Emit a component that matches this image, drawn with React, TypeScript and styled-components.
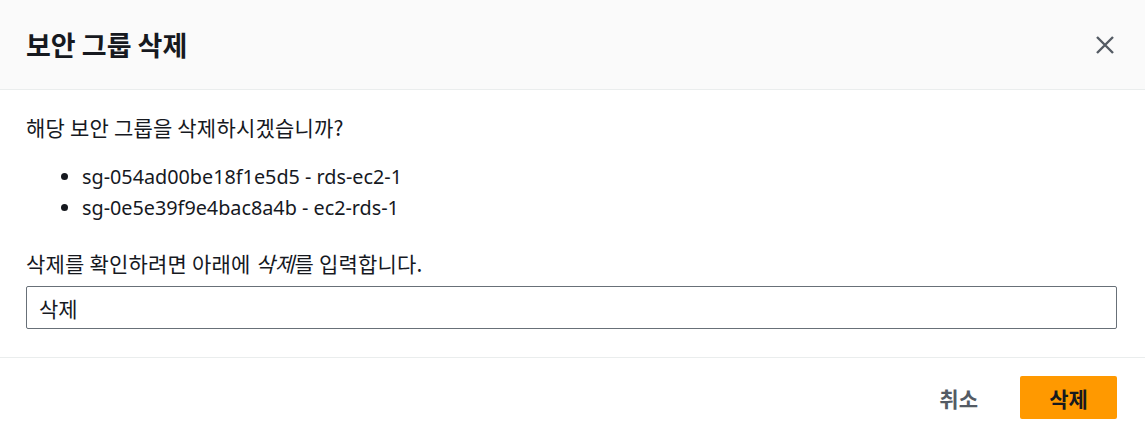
import React, { useState } from 'react';
import styled, { createGlobalStyle } from 'styled-components';

const GlobalStyle = createGlobalStyle`
  html, body {
    margin: 0;
    padding: 0;
    background: #ffffff;
  }
  body {
    font-family: 'Noto Sans', 'Noto Sans CJK KR', sans-serif;
    color: #16191f;
  }
  * { box-sizing: border-box; }
`;

const Dialog = styled.div`
  width: 1145px;
  height: 437px;
  display: flex;
  flex-direction: column;
  background: #ffffff;
`;

const Header = styled.div`
  height: 90px;
  display: flex;
  align-items: center;
  justify-content: space-between;
  padding: 0 26px;
  background: #fafafa;
  border-bottom: 1px solid #eaeded;
`;

const Title = styled.h2`
  margin: 0;
  font-family: 'Noto Sans CJK KR', sans-serif;
  font-size: 27px;
  font-weight: 700;
  color: #16191f;
`;

const CloseButton = styled.button`
  border: 0;
  background: transparent;
  padding: 0;
  width: 24px;
  height: 24px;
  display: flex;
  align-items: center;
  justify-content: center;
  margin-right: 2px;
  cursor: pointer;
`;

const Body = styled.div`
  padding: 24px 28px 28px 26px;
  border-bottom: 1px solid #eaeded;
`;

const Paragraph = styled.p`
  margin: 0;
  font-family: 'Noto Sans CJK KR', sans-serif;
  font-size: 21px;
  line-height: 26px;
  letter-spacing: 0.2px;
  color: #16191f;
`;

const List = styled.ul`
  margin: 21px 0 27px 0;
  padding-left: 56px;
`;

const Item = styled.li`
  font-size: 19.8px;
  line-height: 31px;
  color: #16191f;
`;

const Input = styled.input`
  display: block;
  width: 100%;
  height: 43px;
  margin-top: 10px;
  padding: 0 12px;
  border: 1px solid #687078;
  border-radius: 2px;
  font-family: 'Noto Sans CJK KR', sans-serif;
  font-size: 21px;
  color: #16191f;
  outline: none;
`;

const Footer = styled.div`
  display: flex;
  justify-content: flex-end;
  align-items: center;
  gap: 22px;
  padding: 18px 28px 0 0;
`;

const Button = styled.button<{ $primary?: boolean }>`
  height: 43px;
  min-width: ${({ $primary }) => ($primary ? '97px' : '78px')};
  padding: 0 20px;
  border: 0;
  border-radius: 2px;
  font-family: 'Noto Sans CJK KR', sans-serif;
  font-size: 21px;
  font-weight: 700;
  background: ${({ $primary }) => ($primary ? '#ff9900' : 'transparent')};
  color: ${({ $primary }) => ($primary ? '#16191f' : '#545b64')};
  cursor: pointer;
`;

export default function App() {
  const [value, setValue] = useState('삭제');
  return (
    <>
      <GlobalStyle />
      <Dialog>
        <Header>
          <Title>보안 그룹 삭제</Title>
          <CloseButton aria-label="닫기">
            <svg width="20" height="20" viewBox="0 0 20 20">
              <path d="M2 2 L18 18 M18 2 L2 18" stroke="#545b64" strokeWidth="2.4" fill="none" />
            </svg>
          </CloseButton>
        </Header>
        <Body>
          <Paragraph>해당 보안 그룹을 삭제하시겠습니까?</Paragraph>
          <List>
            <Item>sg-054ad00be18f1e5d5 - rds-ec2-1</Item>
            <Item>sg-0e5e39f9e4bac8a4b - ec2-rds-1</Item>
          </List>
          <Paragraph>
            삭제를 확인하려면 아래에 <i>삭제</i>를 입력합니다.
          </Paragraph>
          <Input value={value} onChange={(e) => setValue(e.target.value)} />
        </Body>
        <Footer>
          <Button>취소</Button>
          <Button $primary>삭제</Button>
        </Footer>
      </Dialog>
    </>
  );
}
